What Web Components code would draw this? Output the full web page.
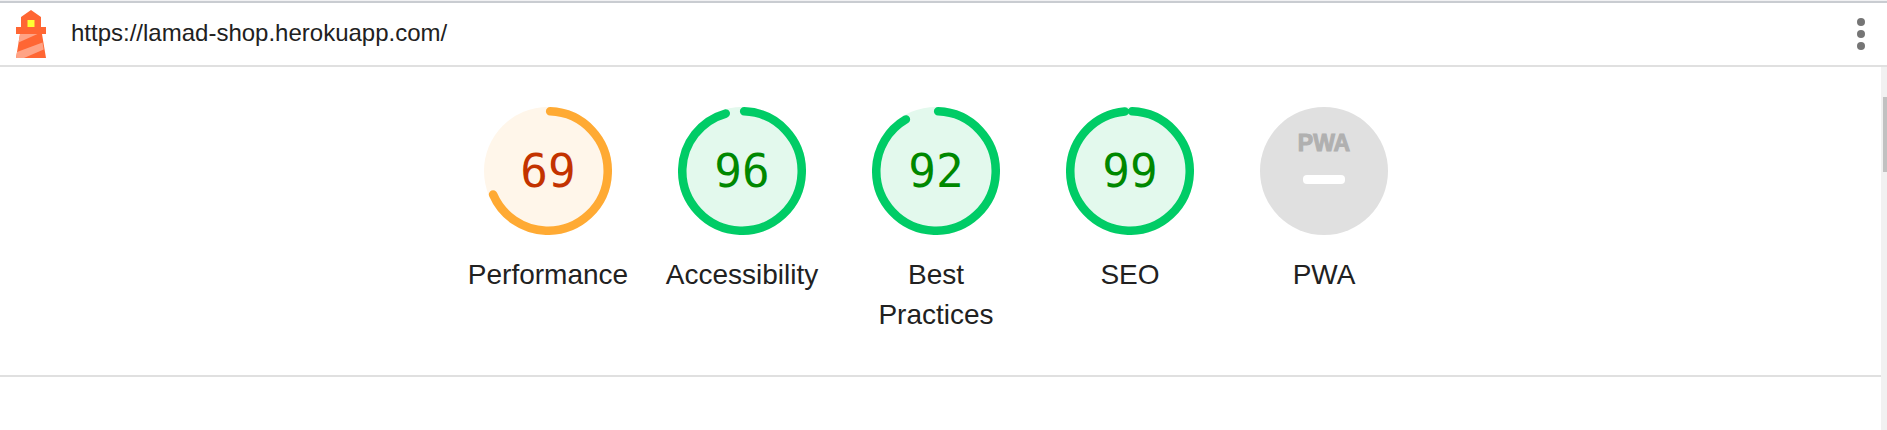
<!DOCTYPE html>
<html lang="en">
<head>
<meta charset="utf-8">
<meta name="viewport" content="width=device-width, initial-scale=1">
<title>Lighthouse report</title>
<style>
  body { margin: 0; background: #fff; color: #212121; font-family: "Liberation Sans", Arial, sans-serif; }
</style>
</head>
<body>
<report-app>
  <report-topbar slot="topbar" href="https://lamad-shop.herokuapp.com/"></report-topbar>
  <score-gauge score="69">Performance</score-gauge>
  <score-gauge score="96">Accessibility</score-gauge>
  <score-gauge score="92">Best Practices</score-gauge>
  <score-gauge score="99">SEO</score-gauge>
  <pwa-gauge>PWA</pwa-gauge>
</report-app>

<script>
class ReportApp extends HTMLElement {
  connectedCallback() {
    this.attachShadow({ mode: 'open' }).innerHTML = `
      <style>
        :host { display: flex; flex-direction: column; min-height: 100vh; }
        .body { flex: 1; display: flex; }
        main { flex: 1; min-width: 0; }
        .scores { display: flex; flex-wrap: wrap; justify-content: center; padding: 40px 9px 40px 0; border-bottom: 2px solid #e0e0e0; }
        .track { width: 4px; padding: 30px 0 0 2px; background: #f1f1f1; }
        .thumb { height: 75px; background: #c1c1c1; }
      </style>
      <slot name="topbar"></slot>
      <div class="body">
        <main><div class="scores"><slot></slot></div></main>
        <div class="track" aria-hidden="true"><div class="thumb"></div></div>
      </div>`;
  }
}

class ReportTopbar extends HTMLElement {
  connectedCallback() {
    this.attachShadow({ mode: 'open' }).innerHTML = `
      <style>
        :host { display: block; background: #f1f1f3; padding-top: 1px; }
        header { display: flex; align-items: center; height: 62px; padding: 0 14px 0 16px; background: #fff;
                 border-top: 2px solid #c9ccd1; border-bottom: 2px solid #e0e0e0; }
        svg { display: block; }
        a { flex: 1; min-width: 0; margin-left: 25px; padding-bottom: 2px; font-size: 24px; line-height: 32px; color: #212121; text-decoration: none; }
        button { margin: 0; padding: 8px; border: 0; background: none; }
      </style>
      <header>
        <svg width="30" height="48" viewBox="0 0 30 48" aria-hidden="true">
          <path fill="#ff6633" d="M15 0l10 7v10h5v7h-4l4 24H0l4-24H0v-7h5V7z"/>
          <path fill="#ffa385" d="M4 24h17.500L2.500 32.500zM26.500 32.500l1.200 7L8 48H0l1-6z"/>
          <path fill="#ffff33" d="M11.500 10h7v7h-7z"/>
        </svg>
        <a></a>
        <button type="button" aria-label="Tools menu">
          <svg width="8" height="32" viewBox="0 0 8 32" fill="#757575" aria-hidden="true">
            <circle cx="4" cy="4" r="4"/><circle cx="4" cy="16" r="4"/><circle cx="4" cy="28" r="4"/>
          </svg>
        </button>
      </header>`;
    const link = this.shadowRoot.querySelector('a');
    link.href = link.textContent = this.getAttribute('href');
  }
}

const gaugeStyle = `
  :host { display: block; box-sizing: border-box; width: 194px; padding: 0 16px; }
  a { display: flex; flex-direction: column; align-items: center; gap: 20px; color: inherit; text-decoration: none; }
  svg { display: block; width: 128px; height: 128px; }
  .label { font-size: 28px; line-height: 40px; text-align: center; }`;

class ScoreGauge extends HTMLElement {
  connectedCallback() {
    const score = Number(this.getAttribute('score'));
    const [arc, ink, fill] = score >= 90 ? ['#00cc66', '#008800', '#e3f9ed'] : ['#ffaa33', '#c33300', '#fff6ea'];
    const length = score / 100 * 351.858 - 4;
    this.attachShadow({ mode: 'open' }).innerHTML = `
      <style>${gaugeStyle}
        .gauge { display: grid; place-items: center; }
        .gauge > * { grid-area: 1 / 1; }
        .score { font: 46px/56px "DejaVu Sans Mono", monospace; color: ${ink}; }
      </style>
      <a href="#">
        <div class="gauge">
          <svg viewBox="0 0 120 120" aria-hidden="true">
            <circle cx="60" cy="60" r="60" fill="${fill}"/>
            <circle cx="60" cy="60" r="56" fill="none" stroke="${arc}" stroke-width="8" stroke-linecap="round"
                    stroke-dasharray="${length} 352" transform="rotate(-87.95 60 60)"/>
          </svg>
          <div class="score">${score}</div>
        </div>
        <span class="label"><slot></slot></span>
      </a>`;
  }
}

class PwaGauge extends HTMLElement {
  connectedCallback() {
    this.attachShadow({ mode: 'open' }).innerHTML = `
      <style>${gaugeStyle}
        text { font: bold 23px "Liberation Sans", Arial, sans-serif; fill: #b0b0b0; stroke: #b0b0b0; stroke-width: 1px; text-anchor: middle; }
      </style>
      <a href="#">
        <svg viewBox="0 0 128 128">
          <circle cx="64" cy="64" r="64" fill="#e0e0e0"/>
          <text x="64" y="44">PWA</text>
          <rect x="43" y="68" width="42" height="9" rx="4" fill="#fff"/>
        </svg>
        <span class="label"><slot></slot></span>
      </a>`;
  }
}

customElements.define('report-app', ReportApp);
customElements.define('report-topbar', ReportTopbar);
customElements.define('score-gauge', ScoreGauge);
customElements.define('pwa-gauge', PwaGauge);
</script>
</body>
</html>
